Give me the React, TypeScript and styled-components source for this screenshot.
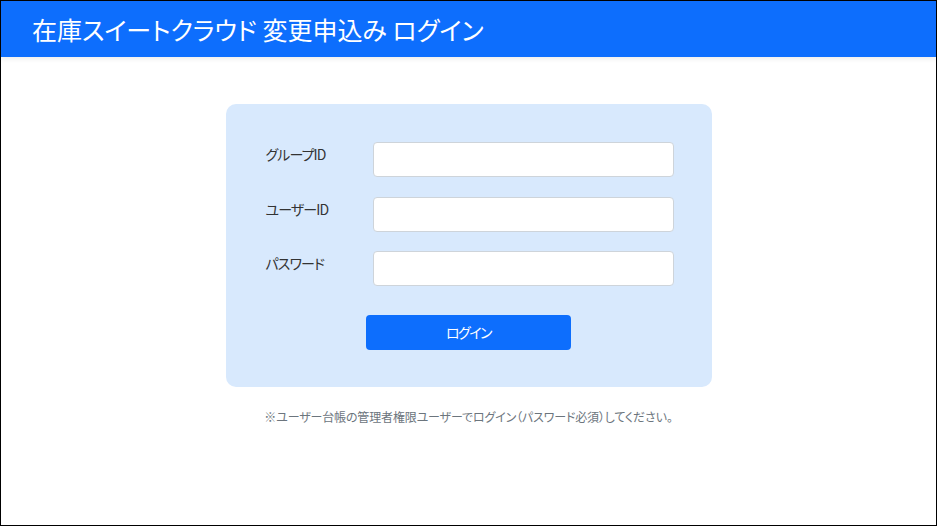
import React from "react";
import styled, { createGlobalStyle } from "styled-components";

const GlobalStyle = createGlobalStyle`
  html, body { margin: 0; padding: 0; }
  body {
    font-family: "Noto Sans CJK JP", "Noto Sans", sans-serif;
    font-feature-settings: "palt";
    background: #fff;
  }
  * { box-sizing: border-box; }
`;

const Page = styled.div`
  width: 100vw;
  height: 100vh;
  border: 1px solid #000;
  display: flex;
  flex-direction: column;
  overflow: hidden;
`;

const Header = styled.header`
  height: 56px;
  flex: none;
  background: #0d6efd;
  display: flex;
  align-items: center;
  padding-left: 31px;
  box-shadow: 0 2px 5px rgba(0, 0, 0, 0.08);
  position: relative;
  z-index: 1;
`;

const Title = styled.h1`
  margin: 0;
  color: #fff;
  font-size: 25px;
  font-weight: 400;
  letter-spacing: 0;
  line-height: 1;
  padding-top: 1px;
`;

const Main = styled.main`
  display: flex;
  flex-direction: column;
  align-items: center;
  padding-top: 47px;
`;

const Card = styled.form`
  width: 486px;
  background: #d8e9fd;
  border-radius: 10px;
  padding: 38px 38px 37px 40px;
  display: flex;
  flex-direction: column;
`;

const Row = styled.div`
  display: flex;
  align-items: flex-start;
  margin-bottom: 19.5px;
`;

const Label = styled.label`
  width: 107px;
  flex: none;
  font-size: 14px;
  letter-spacing: -0.9px;
  line-height: 24px;
  color: #333;
`;

const Input = styled.input`
  width: 301px;
  height: 35px;
  border: 1px solid #ced4da;
  border-radius: 4px;
  background: #fff;
  outline: none;
`;

const Actions = styled.div`
  display: flex;
  justify-content: center;
  padding-top: 9px;
  margin-left: -2px;
`;

const Button = styled.button`
  width: 205px;
  height: 35px;
  border: none;
  border-radius: 4px;
  background: #0d6efd;
  color: #fff;
  font-family: inherit;
  font-feature-settings: "palt";
  font-size: 14px;
  letter-spacing: -1.5px;
  cursor: pointer;
`;

const Note = styled.p`
  margin: 21px 0 0;
  font-size: 12px;
  line-height: 18px;
  color: #6c757d;
  letter-spacing: -0.15px;
`;

const fields = ["グループID", "ユーザーID", "パスワード"];

export default function App() {
  return (
    <>
      <GlobalStyle />
      <Page>
        <Header>
          <Title>在庫スイートクラウド 変更申込み ログイン</Title>
        </Header>
        <Main>
          <Card onSubmit={(e) => e.preventDefault()}>
            {fields.map((f, i) => (
              <Row key={f}>
                <Label>{f}</Label>
                <Input type={i === 2 ? "password" : "text"} />
              </Row>
            ))}
            <Actions>
              <Button type="submit">ログイン</Button>
            </Actions>
          </Card>
          <Note>※ユーザー台帳の管理者権限ユーザーでログイン（パスワード必須）してください。</Note>
        </Main>
      </Page>
    </>
  );
}
